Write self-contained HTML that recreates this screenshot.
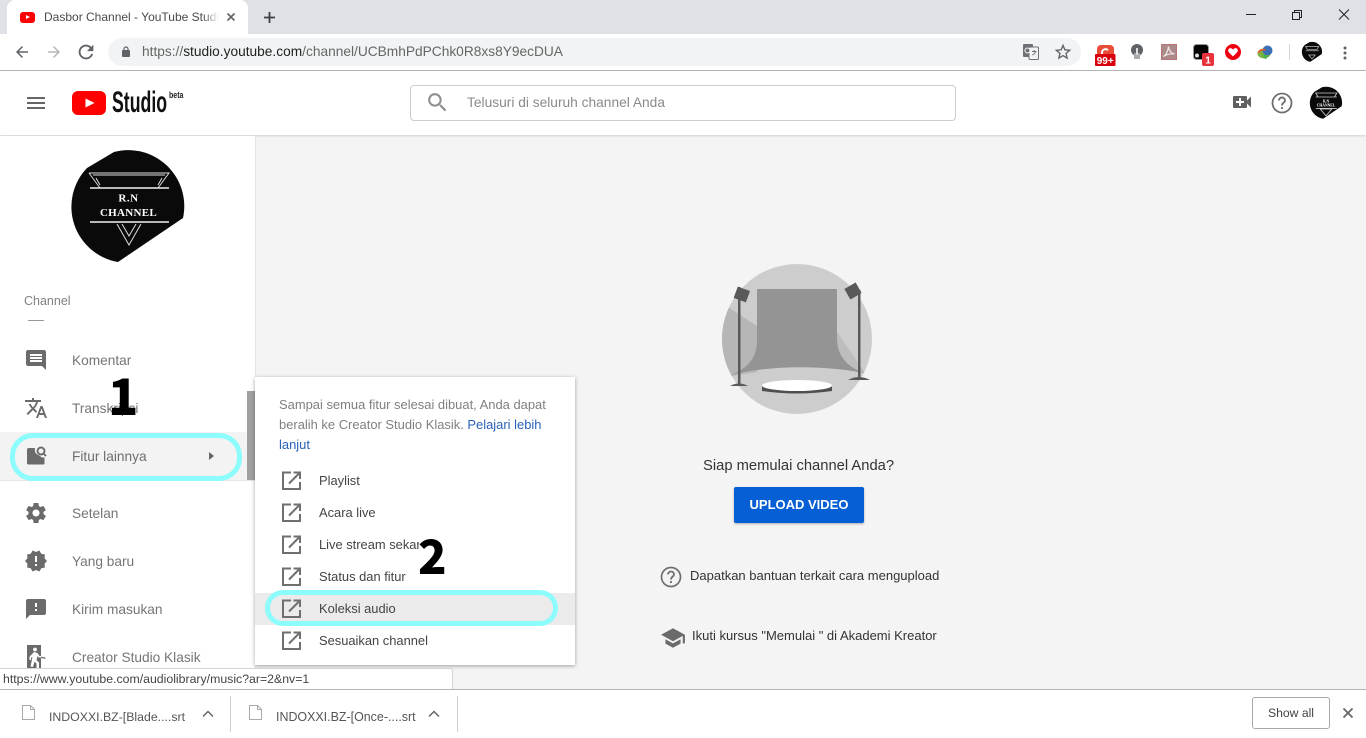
<!DOCTYPE html>
<html lang="id"><head><meta charset="utf-8"><title>Dasbor Channel - YouTube Studio</title>
<style>
html,body{margin:0;padding:0;width:1366px;height:738px;overflow:hidden;background:#f4f4f4;font-family:"Liberation Sans",sans-serif}
.a{position:absolute;white-space:nowrap}
.t{position:absolute;white-space:nowrap;line-height:20px;height:20px}
svg{position:absolute;overflow:visible}
.nav{color:#757575;font-size:13.700px;left:72px}
.pop{color:#444;font-size:12.900px;left:319px}
</style></head><body>

<!-- main -->
<div class="a" style="left:0;top:0;width:1366px;height:738px;background:#f4f4f4"></div>

<!-- tab strip -->
<div class="a" style="left:0;top:0;width:1366px;height:34px;background:#dee1e6"></div>
<div class="a" style="left:7px;top:0;width:241px;height:34px;background:#fff;border-radius:8px 8px 0 0"></div>
<div class="a" style="left:20px;top:12px;width:15px;height:11px;background:#f00;border-radius:3px"></div>
<div class="a" style="left:26px;top:15px;width:0;height:0;border-left:4px solid #fff;border-top:2.500px solid transparent;border-bottom:2.500px solid transparent"></div>
<div class="t" style="left:44px;top:7px;font-size:12px;color:#4a4a4a;width:175px;overflow:hidden">Dasbor Channel - YouTube Studio</div>
<div class="a" style="left:203px;top:7px;width:16px;height:20px;background:linear-gradient(90deg,rgba(255,255,255,0),#fff)"></div>
<svg style="left:226px;top:12px" width="10" height="10"><path d="M1.500 1.500l7 7M8.500 1.500l-7 7" stroke="#5f6368" stroke-width="1.600" fill="none"/></svg>
<svg style="left:263px;top:11px" width="13" height="13"><path d="M6.500 1v11M1 6.500h11" stroke="#3c4043" stroke-width="1.800" fill="none"/></svg>
<!-- window controls -->
<svg style="left:1246px;top:9px" width="105" height="12" fill="none" stroke="#222" stroke-width="1"><path d="M0 5.500h10"/><path d="M46.500 3.500h7v7h-7zM48.500 3.500V1.500h7v7h-2"/><path d="M93 .5l10 10M103 .5l-10 10"/></svg>

<!-- toolbar -->
<div class="a" style="left:0;top:34px;width:1366px;height:36px;background:#fff"></div>
<div class="a" style="left:0;top:70px;width:1366px;height:1px;background:#b5b5b5"></div>
<svg style="left:13px;top:43px" width="18" height="18" viewBox="0 0 24 24" fill="#5f6368"><path d="M20 11H7.830l5.590-5.590L12 4l-8 8 8 8 1.410-1.410L7.830 13H20v-2z"/></svg>
<svg style="left:45px;top:43px" width="18" height="18" viewBox="0 0 24 24" fill="#b5b7ba"><path d="M4 11h12.170l-5.590-5.590L12 4l8 8-8 8-1.410-1.410L16.170 13H4v-2z"/></svg>
<svg style="left:75px;top:41px" width="22" height="22" viewBox="0 0 24 24" fill="#5f6368"><path d="M17.650 6.350C16.200 4.900 14.210 4 12 4c-4.420 0-7.990 3.580-7.990 8s3.570 8 7.990 8c3.730 0 6.840-2.550 7.730-6h-2.080c-.82 2.330-3.040 4-5.650 4-3.310 0-6-2.690-6-6s2.690-6 6-6c1.660 0 3.140.69 4.220 1.780L13 11h7V4l-2.350 2.350z"/></svg>
<div class="a" style="left:108px;top:38px;width:973px;height:28px;background:#f1f3f4;border-radius:14px"></div>
<svg style="left:121px;top:46px" width="11" height="12" fill="#5f6368"><rect x="1" y="4" width="8" height="7" rx="1"/><path d="M3 4.500V3a2 2 0 014 0v1.500" fill="none" stroke="#5f6368" stroke-width="1.200"/></svg>
<div class="t" style="left:142px;top:42px;font-size:13.720px;color:#666">https://<span style="color:#222">studio.youtube.com</span>/channel/UCBmhPdPChk0R8xs8Y9ecDUA</div>
<!-- translate icon -->
<svg style="left:1023px;top:44px" width="16" height="16"><rect x="0" y="0" width="10" height="13" rx="1" fill="#6d7074"/><rect x="6" y="3" width="9.500" height="12.500" rx="1" fill="#f1f3f4" stroke="#6d7074"/><circle cx="4.500" cy="6.500" r="2.500" fill="none" stroke="#fff"/><path d="M9 7.500h4.500M11.200 6v1.500M12.500 7.500c-.5 2-2 3-3.300 3.500" stroke="#6d7074" fill="none" stroke-width=".9"/></svg>
<svg style="left:1053px;top:42px" width="20" height="20" viewBox="0 0 24 24" fill="#5f6368"><path d="M22 9.240l-7.190-.62L12 2 9.190 8.630 2 9.240l5.460 4.730L5.820 21 12 17.270 18.180 21l-1.630-7.030L22 9.240zM12 15.400l-3.760 2.270 1-4.280-3.320-2.880 4.380-.38L12 6.100l1.710 4.040 4.380.38-3.320 2.880 1 4.280L12 15.400z"/></svg>
<!-- extensions -->
<svg style="left:1095px;top:44px" width="22" height="23"><path d="M2 14V5a4 4 0 014-4h9a4 4 0 014 4v9z" fill="#ea4c3a"/><path d="M7 10V8.500a3.500 3.500 0 016-2.300" fill="none" stroke="#fff" stroke-width="2"/><rect x="0" y="10" width="20.500" height="12" rx="1" fill="#d8000c"/><text x="10.200" y="20" text-anchor="middle" font-family="Liberation Sans" font-size="10" font-weight="bold" fill="#fff">99+</text></svg>
<svg style="left:1130px;top:44px" width="14" height="16"><circle cx="7" cy="6" r="6" fill="#5f6368"/><rect x="4" y="9" width="6" height="6" rx="1" fill="#a9a9a9"/><rect x="6" y="4" width="2" height="7" fill="#ddd"/></svg>
<svg style="left:1161px;top:44px" width="16" height="16"><rect width="16" height="16" fill="#ac8a8a"/><rect x=".5" y=".5" width="15" height="15" fill="none" stroke="#b77"/><path d="M2.500 12.500C5 11 7 7 7.500 2.500 8 7 10.500 9.500 13.500 10 10 9.500 5.500 10.500 2.500 12.500z" fill="none" stroke="#f0e8e8" stroke-width="1.200"/></svg>
<svg style="left:1193px;top:44px" width="23" height="23"><rect x=".5" y=".5" width="15" height="15" rx="3" fill="#050505" stroke="#999"/><circle cx="4" cy="11.500" r="2" fill="#ddd"/><rect x="9" y="9" width="12" height="13" rx="2" fill="#e8323c"/><text x="15" y="19.500" text-anchor="middle" font-family="Liberation Sans" font-size="10" font-weight="bold" fill="#fff">1</text></svg>
<svg style="left:1225px;top:44px" width="16" height="16"><circle cx="8" cy="8" r="8" fill="#ee0010"/><path d="M8 12.500L3.800 8.200a2.400 2.400 0 013.500-3.300l.7.700.7-.7a2.400 2.400 0 013.500 3.300z" fill="#fff"/></svg>
<svg style="left:1257px;top:44px" width="17" height="17"><ellipse cx="7" cy="9.500" rx="6.500" ry="5" fill="#7cb342"/><circle cx="10.500" cy="6.500" r="5" fill="#3b6fb6"/><path d="M1.500 9a5 4 0 017-3" stroke="#e6542c" stroke-width="1.500" fill="none"/><path d="M5 11h7l-3.500 4.500z" fill="#4caf50"/></svg>
<div class="a" style="left:1289px;top:44px;width:1px;height:16px;background:#d5d5d5"></div>
<svg style="left:1302px;top:42px" width="20" height="20" viewBox="72 151 112 112"><path d="M87 168L114 152A56 56 0 01183 218L118 262A56 56 0 0187 168z" fill="#0a0a0a"/><path d="M92 176h74l-10 16h-54zM92 200h74M110 224h36l-18 22z" fill="none" stroke="#bbb" stroke-width="4"/></svg>
<svg style="left:1343px;top:46px" width="4" height="14" fill="#5f6368"><circle cx="2" cy="2" r="1.500"/><circle cx="2" cy="7" r="1.500"/><circle cx="2" cy="12" r="1.500"/></svg>

<!-- app header -->
<div class="a" style="left:0;top:71px;width:1366px;height:64px;background:#fff;box-shadow:0 1px 2px rgba(0,0,0,.15)"></div>
<svg style="left:27px;top:97px" width="18" height="12" fill="#666"><rect y="0" width="18" height="2"/><rect y="5" width="18" height="2"/><rect y="10" width="18" height="2"/></svg>
<svg style="left:72px;top:91px" width="34" height="24"><rect width="34" height="24" rx="6" fill="#f00"/><path d="M13.500 7.500l9 4.500-9 4.500z" fill="#fff"/></svg>
<div class="a" style="left:112px;top:88px;font-size:30px;line-height:30px;font-weight:bold;color:#111;transform:scaleX(.59);transform-origin:0 0">Studio</div>
<div class="a" style="left:169px;top:90px;font-size:9px;line-height:10px;font-weight:bold;color:#222;transform:scaleX(.78);transform-origin:0 0">beta</div>
<div class="a" style="left:410px;top:85px;width:544px;height:34px;border:1px solid #ccc;border-radius:4px;background:#fff"></div>
<svg style="left:425px;top:90px" width="25" height="25" viewBox="0 0 24 24" fill="#8e8e8e"><path d="M15.500 14h-.79l-.28-.27C15.410 12.590 16 11.110 16 9.500 16 5.910 13.090 3 9.500 3S3 5.910 3 9.500 5.910 16 9.500 16c1.610 0 3.090-.59 4.230-1.570l.27.28v.79l5 4.990L20.490 19l-4.990-5zm-6 0C7.010 14 5 11.990 5 9.500S7.010 5 9.500 5 14 7.010 14 9.500 11.990 14 9.500 14z"/></svg>
<div class="t" style="left:467px;top:93px;font-size:13.750px;color:#8a8a8a">Telusuri di seluruh channel Anda</div>
<svg style="left:1230px;top:90px" width="24" height="24" viewBox="0 0 24 24" fill="#606060"><path d="M17 10.500V7c0-.55-.45-1-1-1H4c-.55 0-1 .45-1 1v10c0 .55.45 1 1 1h12c.55 0 1-.45 1-1v-3.500l4 4v-11l-4 4zM14 13h-3v3H9v-3H6v-2h3V8h2v3h3v2z"/></svg>
<svg style="left:1270px;top:91px" width="24" height="24" viewBox="0 0 24 24" fill="none" stroke="#6f6f6f"><circle cx="12" cy="12" r="9.500" stroke-width="1.800"/><path d="M9 9.500a3 3 0 116 0c0 2-3 2.200-3 5" stroke-width="1.900"/><circle cx="12" cy="17" r="1.100" fill="#6f6f6f" stroke="none"/></svg>
<svg style="left:1310px;top:87px" width="32" height="32" viewBox="72 151 112 112"><path d="M87 168L114 152A56 56 0 01183 218L118 262A56 56 0 0187 168z" fill="#0a0a0a"/><path d="M92 172h74l-8 14h-58zM92 186h74M92 226h74M108 228h40l-20 24z" fill="none" stroke="#ccc" stroke-width="3"/><text x="128" y="205" text-anchor="middle" font-family="Liberation Serif" font-weight="bold" font-size="13" fill="#fff">R.N</text><text x="128" y="220" text-anchor="middle" font-family="Liberation Serif" font-weight="bold" font-size="13" fill="#fff">CHANNEL</text></svg>

<!-- sidebar -->
<div class="a" style="left:0;top:136px;width:255px;height:533px;background:#fff;border-right:1px solid #e4e4e4"></div>
<svg style="left:72px;top:151px" width="112" height="112" viewBox="72 151 112 112"><path d="M87 168L114 152A56 56 0 01183 218L118 262A56 56 0 0187 168z" fill="#0a0a0a"/>
<path d="M89 173h80l-11 15M89 173l11 15M93 175h72M96 178l4 7M162 178l-4 7" fill="none" stroke="#ddd" stroke-width="1"/>
<path d="M90 188h79M90 222h79" fill="none" stroke="#f2f2f2" stroke-width="1.400"/>
<path d="M117 224l12 21 12-21M122 224l7 12 7-12" fill="none" stroke="#ddd" stroke-width="1"/>
<text x="128.500" y="201.500" text-anchor="middle" font-family="Liberation Serif" font-weight="bold" font-size="11" fill="#fff" letter-spacing=".5">R.N</text>
<text x="128.500" y="216" text-anchor="middle" font-family="Liberation Serif" font-weight="bold" font-size="11" fill="#fff" letter-spacing=".3">CHANNEL</text></svg>
<div class="t" style="left:24px;top:291px;font-size:12.500px;color:#808080">Channel</div>
<div class="a" style="left:28px;top:320px;width:16px;height:1px;background:#999"></div>

<svg style="left:24px;top:348px" width="24" height="24" viewBox="0 0 24 24" fill="#6b6b6b"><path d="M21.990 4c0-1.100-.89-2-1.990-2H4c-1.100 0-2 .9-2 2v12c0 1.100.9 2 2 2h14l4 4-.01-18zM18 14H6v-2h12v2zm0-3H6V9h12v2zm0-3H6V6h12v2z"/></svg>
<div class="t nav" style="top:351px">Komentar</div>
<svg style="left:24px;top:396px" width="24" height="24" viewBox="0 0 24 24" fill="#6b6b6b"><path d="M12.870 15.070l-2.540-2.510.03-.03c1.740-1.940 2.980-4.170 3.710-6.530H17V4h-7V2H8v2H1v1.990h11.170C11.500 7.920 10.440 9.750 9 11.350 8.070 10.320 7.300 9.190 6.690 8h-2c.73 1.630 1.730 3.170 2.980 4.560l-5.090 5.020L4 19l5-5 3.110 3.110.76-2.040zM18.500 10h-2L12 22h2l1.120-3h4.750L21 22h2l-4.500-12zm-2.620 7l1.620-4.330L19.120 17h-3.240z"/></svg>
<div class="t nav" style="top:399px">Transkripsi</div>

<div class="a" style="left:0;top:432px;width:255px;height:48px;background:#f3f3f3"></div>
<div class="a" style="left:0;top:480px;width:255px;height:1px;background:#e6e6e6"></div>
<svg style="left:26px;top:446px" width="20" height="20" fill="#6b6b6b"><path d="M9 2H3a2 2 0 00-2 2v13a1.500 1.500 0 001.500 1.500H17a1.500 1.500 0 001.500-1.500V11.500h-2.500L12.500 9A5.500 5.500 0 019 2z"/><circle cx="15" cy="5" r="3.500" fill="none" stroke="#6b6b6b" stroke-width="1.900"/><path d="M17.500 7.500l2.500 2.500" stroke="#6b6b6b" stroke-width="1.900"/></svg>
<div class="t nav" style="top:447px;color:#6e6e6e">Fitur lainnya</div>
<div class="a" style="left:209px;top:452px;width:0;height:0;border-left:5px solid #666;border-top:4.500px solid transparent;border-bottom:4.500px solid transparent"></div>
<div class="a" style="left:247px;top:391px;width:8px;height:89px;background:#a0a0a0"></div>
<div class="a" style="left:10px;top:433px;width:222px;height:38px;border:5px solid #8dfcfc;border-radius:23px"></div>

<svg style="left:24px;top:501px" width="24" height="24" viewBox="0 0 24 24" fill="#6b6b6b"><path d="M19.430 12.980c.04-.32.07-.64.07-.98s-.03-.66-.07-.98l2.110-1.650c.19-.15.24-.42.12-.64l-2-3.460c-.12-.22-.39-.3-.61-.22l-2.490 1c-.52-.4-1.080-.73-1.690-.98l-.38-2.650C14.460 2.180 14.250 2 14 2h-4c-.25 0-.46.18-.49.42l-.38 2.650c-.61.25-1.170.59-1.690.98l-2.490-1c-.23-.09-.49 0-.61.22l-2 3.460c-.13.22-.07.49.12.64l2.110 1.650c-.04.32-.07.65-.07.98s.03.66.07.98l-2.110 1.650c-.19.15-.24.42-.12.64l2 3.460c.12.22.39.3.61.22l2.490-1c.52.4 1.080.73 1.690.98l.38 2.650c.03.24.24.42.49.42h4c.25 0 .46-.18.49-.42l.38-2.650c.61-.25 1.170-.59 1.690-.98l2.490 1c.23.09.49 0 .61-.22l2-3.460c.12-.22.07-.49-.12-.64l-2.110-1.650zM12 15.500c-1.930 0-3.500-1.570-3.500-3.500s1.570-3.500 3.500-3.500 3.500 1.570 3.500 3.500-1.570 3.500-3.500 3.500z"/></svg>
<div class="t nav" style="top:504px">Setelan</div>
<svg style="left:24px;top:549px" width="24" height="24" viewBox="0 0 24 24" fill="#6b6b6b"><path d="M23 12l-2.440-2.780.34-3.680-3.610-.82-1.890-3.180L12 3 8.600 1.540 6.710 4.720l-3.610.81.34 3.680L1 12l2.440 2.780-.34 3.690 3.610.82 1.890 3.180L12 21l3.400 1.460 1.890-3.180 3.610-.82-.34-3.680L23 12zm-10 5h-2v-2h2v2zm0-4h-2V7h2v6z"/></svg>
<div class="t nav" style="top:552px">Yang baru</div>
<svg style="left:24px;top:597px" width="24" height="24" viewBox="0 0 24 24" fill="#6b6b6b"><path d="M20 2H4c-1.100 0-1.990.9-1.990 2L2 22l4-4h14c1.100 0 2-.9 2-2V4c0-1.100-.9-2-2-2zm-7 12h-2v-2h2v2zm0-4h-2V6h2v4z"/></svg>
<div class="t nav" style="top:600px">Kirim masukan</div>
<svg style="left:27px;top:645px" width="19" height="24"><rect x="0" y="0" width="14" height="24" fill="#6b6b6b"/><circle cx="8" cy="4.500" r="1.900" fill="#fff"/><path d="M7 7l3.500 1 2 3 5.500.8v1.500l-6.500-1-1-1.200-1 4 2.500 2.500V23H9.500v-4.500L7.500 16.500 6 22 3.500 21.500 5.500 12l-1.500.8V15H2.500v-3.200z" fill="#fff"/><path d="M14 11.800l4.500.7v1.300L14 13.100z" fill="#6b6b6b"/></svg>
<div class="t nav" style="top:648px">Creator Studio Klasik</div>

<!-- center empty state -->
<svg style="left:722px;top:264px" width="150" height="150" viewBox="722 264 150 150">
<defs><clipPath id="c"><circle cx="797" cy="339" r="75"/></clipPath></defs>
<circle cx="797" cy="339" r="75" fill="#cdcdcd"/>
<g clip-path="url(#c)">
<path d="M722 303L757 326V372L732 376H722z" fill="#b6b6b6"/>
<path d="M837 332L866 374 832 360z" fill="#bdbdbd"/>
<path d="M757 290a1 1 0 011-1h78a1 1 0 011 1v48c0 16 8 28 27 35-40-8-95-8-133 2 20-8 26-20 26-35z" fill="#949494"/>
</g>
<rect x="738" y="287" width="2.500" height="97" fill="#595959"/>
<rect x="858" y="290" width="2.500" height="90" fill="#595959"/>
<rect x="735.500" y="288.500" width="13" height="12" transform="rotate(20 742 294)" fill="#595959"/>
<rect x="846.500" y="285" width="13" height="12" transform="rotate(-30 853 291)" fill="#595959"/>
<path d="M730 386q9-5 18 0z" fill="#595959"/>
<path d="M848 380q11-6 22 0z" fill="#595959"/>
<path d="M762 386v5q35 5 70 0v-5z" fill="#4f4f4f"/>
<ellipse cx="797" cy="385.500" rx="35" ry="5.500" fill="#fff"/>
</svg>
<div class="t" style="left:703px;top:456px;font-size:14.750px;color:#333">Siap memulai channel Anda?</div>
<div class="a" style="left:734px;top:487px;width:130px;height:36px;line-height:36px;text-align:center;background:#065fd4;border-radius:2px;color:#fff;font-size:13px;font-weight:bold;box-shadow:0 1px 2px rgba(0,0,0,.3)">UPLOAD VIDEO</div>
<svg style="left:659px;top:565px" width="24" height="24" viewBox="0 0 24 24" fill="none" stroke="#6f6f6f"><circle cx="12" cy="12" r="9.500" stroke-width="1.700"/><path d="M9 9.500a3 3 0 116 0c0 2-3 2.200-3 5" stroke-width="1.800"/><circle cx="12" cy="17" r="1.100" fill="#6f6f6f" stroke="none"/></svg>
<div class="t" style="left:690px;top:566px;font-size:13px;color:#333">Dapatkan bantuan terkait cara mengupload</div>
<svg style="left:660px;top:625px" width="26" height="26" viewBox="0 0 24 24" fill="#6b6b6b"><path d="M5 13.180v4L12 21l7-3.820v-4L12 17l-7-3.820zM12 3L1 9l11 6 9-4.910V17h2V9L12 3z"/></svg>
<div class="t" style="left:692px;top:626px;font-size:13px;color:#333">Ikuti kursus "Memulai " di Akademi Kreator</div>

<!-- popup -->
<div class="a" style="left:255px;top:377px;width:320px;height:288px;background:#fff;box-shadow:0 1px 4px rgba(0,0,0,.35)"></div>
<div class="a" style="left:279px;top:395px;width:285px;font-size:12.950px;line-height:20px;color:#808080;white-space:normal">Sampai semua fitur selesai dibuat, Anda dapat<br>beralih ke Creator Studio Klasik. <span style="color:#2a62b8">Pelajari lebih<br>lanjut</span></div>
<div class="a" style="left:255px;top:593px;width:320px;height:32px;background:#ebebeb"></div>
<svg style="left:282px;top:471px" width="20" height="180" fill="none" stroke="#6f6f6f" stroke-width="2">
<path d="M9 1.500H1v16.500h17V11M11.500 1.500H18V8M17.500 2L7 12.500"/>
<path transform="translate(0,32)" d="M9 1.500H1v16.500h17V11M11.500 1.500H18V8M17.500 2L7 12.500"/>
<path transform="translate(0,64)" d="M9 1.500H1v16.500h17V11M11.500 1.500H18V8M17.500 2L7 12.500"/>
<path transform="translate(0,96)" d="M9 1.500H1v16.500h17V11M11.500 1.500H18V8M17.500 2L7 12.500"/>
<path transform="translate(0,128)" d="M9 1.500H1v16.500h17V11M11.500 1.500H18V8M17.500 2L7 12.500"/>
<path transform="translate(0,160)" d="M9 1.500H1v16.500h17V11M11.500 1.500H18V8M17.500 2L7 12.500"/>
</svg>
<div class="t pop" style="top:471px">Playlist</div>
<div class="t pop" style="top:503px">Acara live</div>
<div class="t pop" style="top:535px;width:100px;overflow:hidden">Live stream sekarang</div>
<div class="t pop" style="top:567px">Status dan fitur</div>
<div class="t pop" style="top:599px">Koleksi audio</div>
<div class="t pop" style="top:631px">Sesuaikan channel</div>
<div class="a" style="left:265px;top:590px;width:283px;height:26px;border:5px solid #8dfcfc;border-radius:18px"></div>

<!-- big numbers -->
<div class="a" style="left:108px;top:366px;font-family:'Noto Sans CJK JP',sans-serif;font-weight:900;font-size:50px;line-height:56px;color:#000">1</div>
<div class="a" style="left:418px;top:526px;font-family:'Noto Sans CJK JP',sans-serif;font-weight:900;font-size:47px;line-height:56px;color:#000">2</div>

<!-- status bubble -->
<div class="a" style="left:0;top:668px;width:452px;height:20px;background:#fff;border-top:1px solid #d4d4d4;border-right:1px solid #d4d4d4;border-radius:0 3px 0 0"></div>
<div class="t" style="left:3px;top:669px;font-size:12.300px;color:#444">https://www.youtube.com/audiolibrary/music?ar=2&amp;nv=1</div>

<!-- download bar -->
<div class="a" style="left:0;top:689px;width:1366px;height:49px;background:#fff;border-top:1px solid #b5b5b5;box-sizing:border-box"></div>
<svg style="left:22px;top:705px" width="13" height="16" fill="#fff" stroke="#a9a9a9"><path d="M.5.500h8l4 4v10H.5zM8.500.500v4h4"/></svg>
<div class="t" style="left:49px;top:707px;font-size:12.300px;color:#555">INDOXXI.BZ-[Blade....srt</div>
<svg style="left:202px;top:710px" width="12" height="8" fill="none" stroke="#666" stroke-width="1.500"><path d="M1 6.500l5-5 5 5"/></svg>
<div class="a" style="left:230px;top:696px;width:1px;height:36px;background:#cfcfcf"></div>
<svg style="left:249px;top:705px" width="13" height="16" fill="#fff" stroke="#a9a9a9"><path d="M.5.500h8l4 4v10H.5zM8.500.500v4h4"/></svg>
<div class="t" style="left:276px;top:707px;font-size:12.450px;color:#555">INDOXXI.BZ-[Once-....srt</div>
<svg style="left:428px;top:710px" width="12" height="8" fill="none" stroke="#666" stroke-width="1.500"><path d="M1 6.500l5-5 5 5"/></svg>
<div class="a" style="left:457px;top:696px;width:1px;height:36px;background:#cfcfcf"></div>
<div class="a" style="left:1252px;top:697px;width:76px;height:30px;line-height:30px;border:1px solid #a8a8a8;border-radius:3px;text-align:center;font-size:12.200px;color:#444">Show all</div>
<svg style="left:1343px;top:708px" width="10" height="10" fill="none" stroke="#666" stroke-width="1.800"><path d="M.5.500l9 9M9.500.500l-9 9"/></svg>

</body></html>
